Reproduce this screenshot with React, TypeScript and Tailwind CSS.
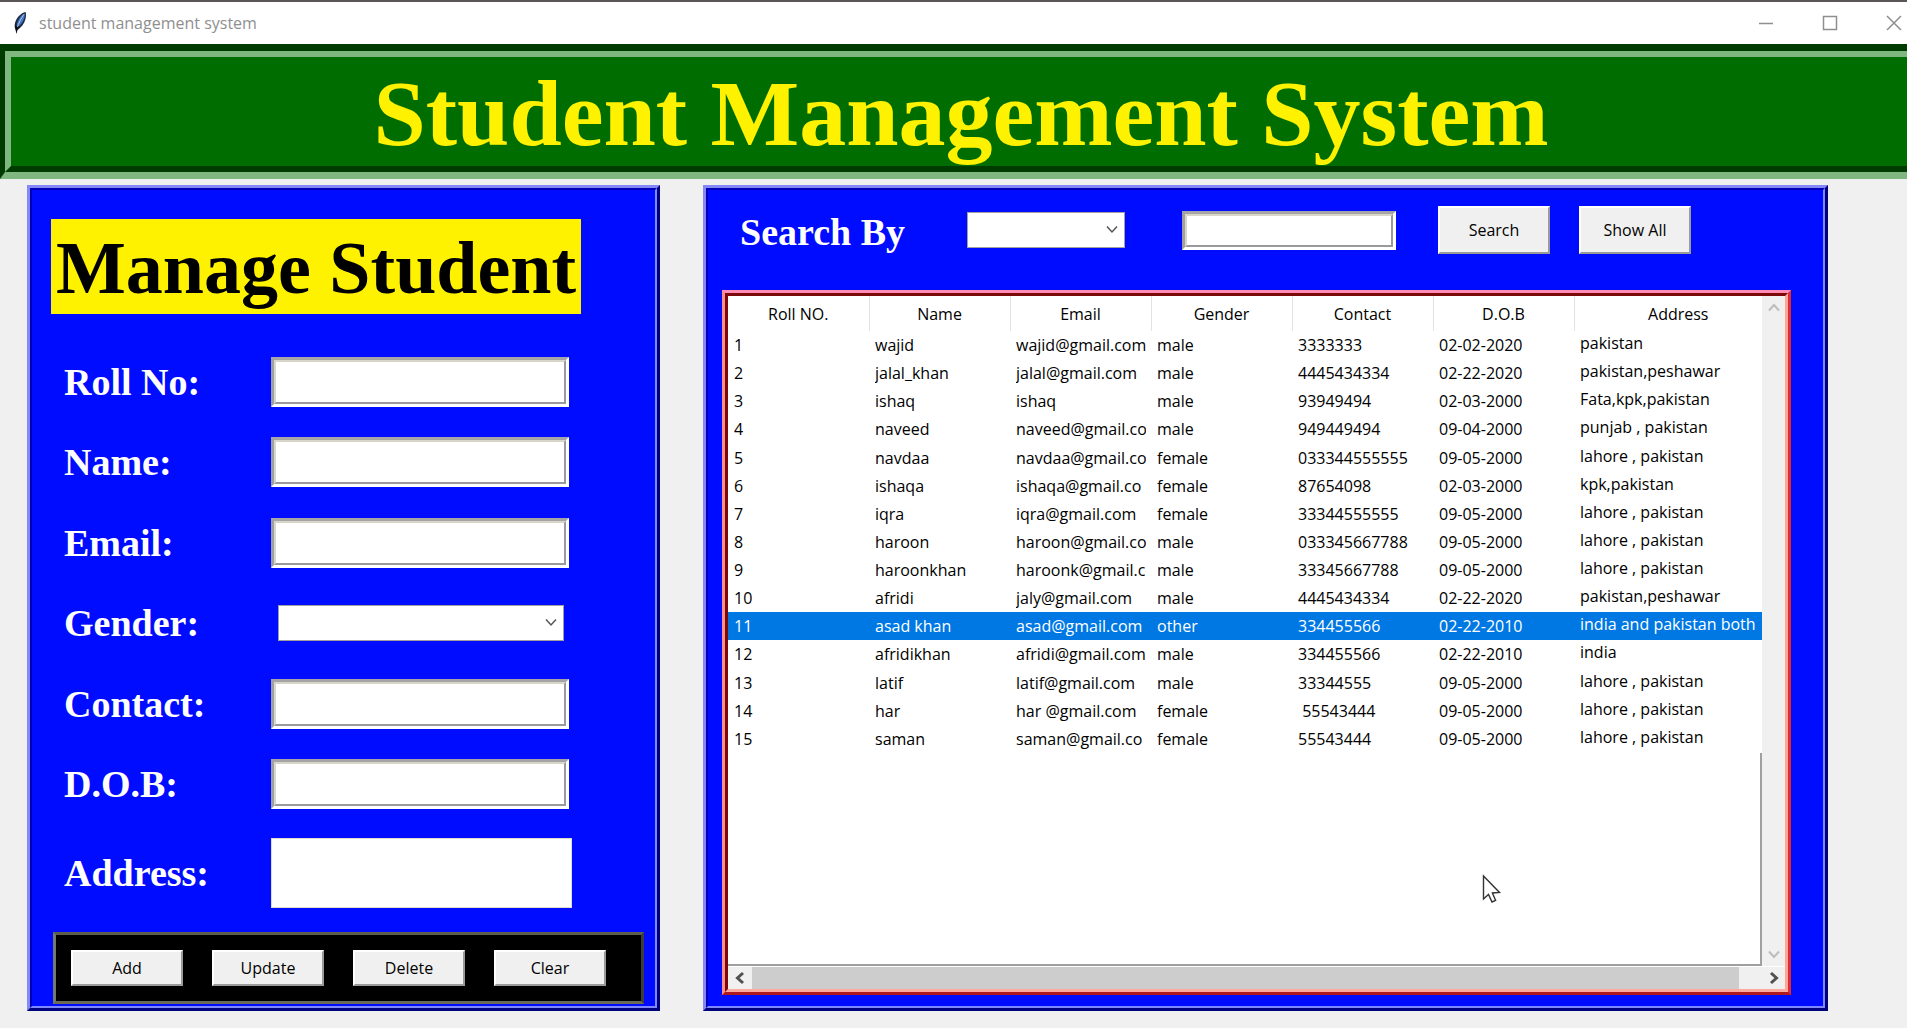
import React from "react";

type Student = {
  roll: string;
  name: string;
  email: string;
  gender: string;
  contact: string;
  dob: string;
  address: string;
};

const row = (
  roll: string,
  name: string,
  email: string,
  gender: string,
  contact: string,
  dob: string,
  address: string,
): Student => ({ roll, name, email, gender, contact, dob, address });

const students: Student[] = [
  row("1", "wajid", "wajid@gmail.com", "male", "3333333", "02-02-2020", "pakistan"),
  row("2", "jalal_khan", "jalal@gmail.com", "male", "4445434334", "02-22-2020", "pakistan,peshawar"),
  row("3", "ishaq", "ishaq", "male", "93949494", "02-03-2000", "Fata,kpk,pakistan"),
  row("4", "naveed", "naveed@gmail.com", "male", "949449494", "09-04-2000", "punjab , pakistan"),
  row("5", "navdaa", "navdaa@gmail.com", "female", "033344555555", "09-05-2000", "lahore , pakistan"),
  row("6", "ishaqa", "ishaqa@gmail.co", "female", "87654098", "02-03-2000", "kpk,pakistan"),
  row("7", "iqra", "iqra@gmail.com", "female", "33344555555", "09-05-2000", "lahore , pakistan"),
  row("8", "haroon", "haroon@gmail.com", "male", "033345667788", "09-05-2000", "lahore , pakistan"),
  row("9", "haroonkhan", "haroonk@gmail.com", "male", "33345667788", "09-05-2000", "lahore , pakistan"),
  row("10", "afridi", "jaly@gmail.com", "male", "4445434334", "02-22-2020", "pakistan,peshawar"),
  row("11", "asad khan", "asad@gmail.com", "other", "334455566", "02-22-2010", "india and pakistan both"),
  row("12", "afridikhan", "afridi@gmail.com", "male", "334455566", "02-22-2010", "india"),
  row("13", "latif", "latif@gmail.com", "male", "33344555", "09-05-2000", "lahore , pakistan"),
  row("14", "har", "har @gmail.com", "female", " 55543444", "09-05-2000", "lahore , pakistan"),
  row("15", "saman", "saman@gmail.co", "female", "55543444", "09-05-2000", "lahore , pakistan"),
];

const columns = ["Roll NO.", "Name", "Email", "Gender", "Contact", "D.O.B"];

const serif = "font-['Liberation_Serif',serif] font-bold";

function Chevron({ className, d, width = 2 }: { className?: string; d: string; width?: number }) {
  return (
    <svg className={className} width="14" height="14" viewBox="0 0 14 14" fill="none" stroke="currentColor" strokeWidth={width} aria-hidden="true">
      <path d={d} />
    </svg>
  );
}

const DOWN = "M2 4.5 L7 10 L12 4.5";
const UP = "M2 9.5 L7 4 L12 9.5";
const LEFT = "M10 2 L4.5 7 L10 12";
const RIGHT = "M4 2 L9.5 7 L4 12";

function Feather() {
  return (
    <svg width="16" height="24" viewBox="0 0 16 24" aria-hidden="true">
      <path d="M13.6 1 C9 2 4.5 6.5 3 12 C2.4 14.5 2.6 17 3.6 19 L4.4 23 L5.2 19 C9 17 12.5 12.5 13.6 7.5 C14.1 5 14.2 2.6 13.6 1 Z" fill="#1d2b44" />
      <path d="M12.6 2.6 C9 4.4 5.6 9 4.7 14.4 L7 15 C10 12.6 12.3 8.6 12.7 5 Z" fill="#4377c4" />
      <path d="M12 3.4 C9.4 7 6.6 11.6 4.8 18" stroke="#a9c8f2" strokeWidth="1" fill="none" />
      <path d="M3 13.5 L4.4 22.6 L6 17.6 L8.4 15.8 L5 16 Z" fill="#0c0f18" />
    </svg>
  );
}

function TitleBar() {
  return (
    <div className="flex h-11 items-center justify-between border-t-2 border-[#5a5658] bg-white pl-3 pr-[5px] text-[#8f8f8f]">
      <div className="flex items-center gap-[11px]">
        <Feather />
        <span className="text-[16px] leading-6">student management system</span>
      </div>
      <div className="flex items-center gap-12">
        <button type="button" aria-label="Minimize" className="block">
          <svg width="16" height="16" viewBox="0 0 16 16" stroke="currentColor" fill="none" strokeWidth="1.5">
            <path d="M1 8.5 H15" />
          </svg>
        </button>
        <button type="button" aria-label="Maximize" className="block">
          <svg width="16" height="16" viewBox="0 0 16 16" stroke="currentColor" fill="none" strokeWidth="1.5">
            <rect x="1.5" y="1.5" width="13" height="13" />
          </svg>
        </button>
        <button type="button" aria-label="Close" className="block">
          <svg width="16" height="16" viewBox="0 0 16 16" stroke="currentColor" fill="none" strokeWidth="1.5">
            <path d="M1 1 L15 15 M15 1 L1 15" />
          </svg>
        </button>
      </div>
    </div>
  );
}

function Header() {
  return (
    <header className="border-b-[7px] border-l-[5px] border-t-[7px] border-b-[#80b680] border-l-[#003c00] border-t-[#003c00]">
      <div className="border-b-[6px] border-l-[6px] border-t-[6px] border-b-[#003c00] border-l-[#80b680] border-t-[#80b680] bg-[#006d00]">
        <h1 className={`${serif} pl-1 pt-1 text-center text-[94px] leading-[105px] text-[#fff200]`}>Student Management System</h1>
      </div>
    </header>
  );
}

function Panel({ children }: { children: React.ReactNode }) {
  return (
    <div className="flex border-[3px] border-b-[#00007c] border-l-[#8489f5] border-r-[#00007c] border-t-[#8489f5]">
      <div className="flex min-w-0 flex-1 flex-col border-2 border-b-[#8088ff] border-l-[#0000b8] border-r-[#8088ff] border-t-[#0000b8] bg-[#000cff]">
        {children}
      </div>
    </div>
  );
}

function Entry({ id, label, size }: { id: string; label?: string; size: string }) {
  return (
    <span className={`${size} flex border-[3px] border-b-white border-l-[#a0a0a0] border-r-white border-t-[#a5a5a8] bg-white`}>
      <input
        id={id}
        type="text"
        aria-label={label}
        className="min-w-0 flex-1 border-2 border-b-[#9a9a9c] border-l-[#d8d6c8] border-r-[#9a9a9c] border-t-[#d8d6c8] bg-white px-1 text-[16px] outline-none"
      />
    </span>
  );
}

function Combo({ id, label, size, options }: { id: string; label?: string; size: string; options: string[] }) {
  return (
    <span className={`${size} relative flex`}>
      <select id={id} aria-label={label} defaultValue="" className="h-full w-full appearance-none border border-[#a0a0a0] bg-white px-2 text-[16px] outline-none">
        <option value=""></option>
        {options.map((o) => (
          <option key={o}>{o}</option>
        ))}
      </select>
      <Chevron d={DOWN} width={1.5} className="pointer-events-none absolute right-1.5 top-2.5 text-[#555]" />
    </span>
  );
}

function FormRow({ id, label, children }: { id: string; label: string; children: React.ReactNode }) {
  return (
    <div className="flex h-[50px] items-center">
      <label htmlFor={id} className={`${serif} w-[207px] text-[38px] leading-[44px] text-white`}>
        {label}
      </label>
      {children}
    </div>
  );
}

function Button({ children, size }: { children: string; size: string }) {
  return (
    <button
      type="button"
      className={`${size} border-2 border-b-[#9a9a9a] border-l-white border-r-[#9a9a9a] border-t-white bg-[#f0f0f0] text-[16px] leading-5 text-black`}
    >
      {children}
    </button>
  );
}

function ManagePanel() {
  return (
    <Panel>
      <h2 className={`${serif} ml-[19px] mt-[29px] self-start bg-[#fff200] px-[5px] pt-1 text-[74px] leading-[91px] text-black`}>Manage Student</h2>
      <form className="flex flex-1 flex-col">
        <div className="ml-8 mt-[43px] flex h-[452px] flex-col justify-between">
          <FormRow id="roll" label="Roll No:">
            <Entry id="roll" size="h-[50px] w-[298px]" />
          </FormRow>
          <FormRow id="name" label="Name:">
            <Entry id="name" size="h-[50px] w-[298px]" />
          </FormRow>
          <FormRow id="email" label="Email:">
            <Entry id="email" size="h-[50px] w-[298px]" />
          </FormRow>
          <FormRow id="gender" label="Gender:">
            <span className="pl-[7px]">
              <Combo id="gender" size="h-9 w-[286px]" options={["male", "female", "other"]} />
            </span>
          </FormRow>
          <FormRow id="contact" label="Contact:">
            <Entry id="contact" size="h-[50px] w-[298px]" />
          </FormRow>
          <FormRow id="dob" label="D.O.B:">
            <Entry id="dob" size="h-[50px] w-[298px]" />
          </FormRow>
        </div>
        <div className="ml-8 mt-[29px] flex items-center">
          <label htmlFor="address" className={`${serif} w-[207px] text-[38px] leading-[44px] text-white`}>
            Address:
          </label>
          <textarea id="address" className="h-[70px] w-[301px] resize-none border border-[#dcdcc8] bg-white px-1 text-[16px] outline-none" />
        </div>
        <div className="ml-[21px] mr-[11px] mt-6 flex gap-[29px] border-[3px] border-b-[#6b6a58] border-l-[#77776e] border-r-[#3c3c3c] border-t-[#5e5e4c] bg-black px-[15px] py-[15px]">
          <Button size="h-9 w-28">Add</Button>
          <Button size="h-9 w-28">Update</Button>
          <Button size="h-9 w-28">Delete</Button>
          <Button size="h-9 w-28">Clear</Button>
        </div>
      </form>
    </Panel>
  );
}

function Cell({ children, className = "pb-0" }: { children: string; className?: string }) {
  return (
    <td className={`${className} pl-1.5 pr-[5px]`}>
      <div className="overflow-hidden whitespace-pre">{children}</div>
    </td>
  );
}

function StudentTable() {
  return (
    <table className="h-[457px] w-full table-fixed border-collapse text-left text-[16px] leading-6 text-black">
      <colgroup>
        {columns.map((c) => (
          <col key={c} className="w-[141px]" />
        ))}
        <col />
      </colgroup>
      <thead>
        <tr className="h-[35px]">
          {columns.map((c) => (
            <th key={c} scope="col" className="border-r border-[#e2e2e2] text-center font-normal">
              {c}
            </th>
          ))}
          <th scope="col" className="pl-5 text-center font-normal">
            Address
          </th>
        </tr>
      </thead>
      <tbody>
        {students.map((s) => (
          <tr key={s.roll} className={s.roll === "11" ? "bg-[#0078e4] text-white" : ""}>
            <Cell>{s.roll}</Cell>
            <Cell>{s.name}</Cell>
            <Cell>{s.email}</Cell>
            <Cell>{s.gender}</Cell>
            <Cell>{s.contact}</Cell>
            <Cell>{s.dob}</Cell>
            <Cell className="pb-1">{s.address}</Cell>
          </tr>
        ))}
      </tbody>
    </table>
  );
}

function Pointer() {
  return (
    <svg className="pointer-events-none absolute left-[754px] top-[578px]" width="20" height="30" viewBox="0 0 20 30" aria-hidden="true">
      <path d="M1.5 2 V25 L6.5 20.5 L10 28 L13.6 26.4 L10.4 19 L17.5 18.5 Z" fill="#fff" stroke="#333" strokeWidth="1.4" />
    </svg>
  );
}

function SearchPanel() {
  return (
    <Panel>
      <form className="flex items-center pl-[32px] pt-4">
        <label htmlFor="search-by" className={`${serif} w-[227px] pt-1 text-[38px] leading-[44px] text-white`}>
          Search By
        </label>
        <Combo id="search-by" size="h-9 w-[158px]" options={["Roll No", "Name", "Contact"]} />
        <span className="ml-[57px] mr-[42px]">
          <Entry id="search-text" label="Search text" size="h-[39px] w-[214px]" />
        </span>
        <Button size="h-12 w-28">Search</Button>
        <span className="ml-[29px]">
          <Button size="h-12 w-28">Show All</Button>
        </span>
      </form>
      <div className="mb-[11px] ml-3.5 mr-8 mt-9 flex flex-1 border-[3px] border-b-[#b01820] border-l-[#ff8c8c] border-r-[#e02c2c] border-t-[#ff8cb4]">
        <div className="relative flex flex-1 flex-col border-[3px] border-b-[#ffaaa0] border-l-[#7c0808] border-r-[#ffa59a] border-t-[#7c0808] bg-white">
          <div className="flex flex-1">
            <div className="flex min-w-0 flex-1 flex-col border-b-2 border-[#a0a0a0]">
              <StudentTable />
              <div className="flex-1 border-r-2 border-[#a0a0a0]" />
            </div>
            <div className="flex w-[23px] flex-col items-center justify-between bg-[#f0f0f0] py-[5px] text-[#bdbdbd]">
              <Chevron d={UP} />
              <Chevron d={DOWN} />
            </div>
          </div>
          <div className="flex h-[23px] items-center border-t border-white bg-[#f0f0f0] text-[#505050]">
            <span className="flex w-6 justify-center">
              <Chevron d={LEFT} width={3} />
            </span>
            <span className="h-full flex-1 bg-[#cdcdcd]" />
            <span className="flex w-[46px] justify-end pr-1">
              <Chevron d={RIGHT} width={3} />
            </span>
          </div>
          <Pointer />
        </div>
      </div>
    </Panel>
  );
}

export default function App() {
  return (
    <div className="flex min-h-screen flex-col bg-[#f0f0f0] font-['Open_Sans','Noto_Sans',sans-serif]">
      <TitleBar />
      <Header />
      <main className="grid flex-1 grid-cols-[633fr_1125fr] gap-[43px] pb-[17px] pl-[27px] pr-[79px] pt-1.5">
        <ManagePanel />
        <SearchPanel />
      </main>
    </div>
  );
}
